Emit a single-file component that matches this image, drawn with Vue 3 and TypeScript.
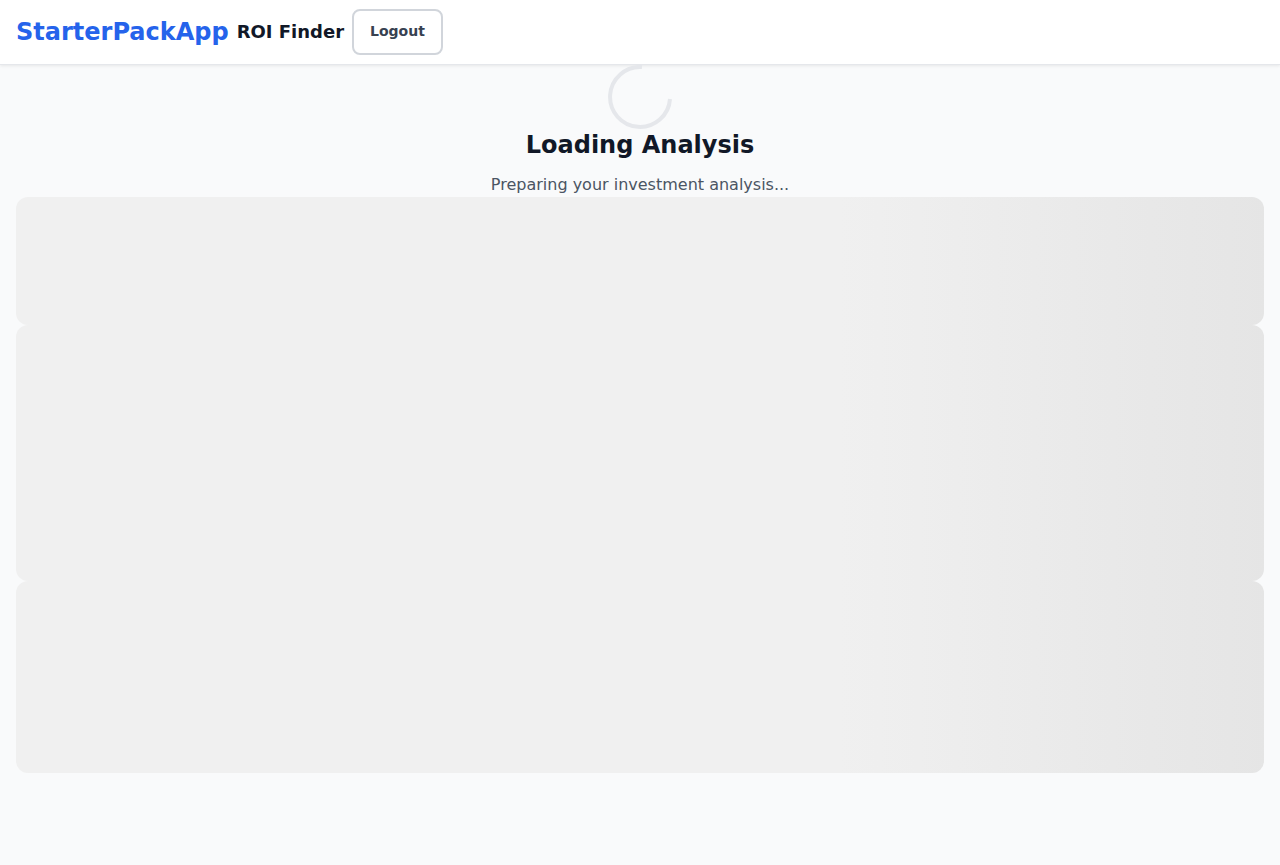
<script setup lang="ts">
interface Skeleton {
  id: string
  size: 'small' | 'large' | 'medium'
}

const skeletons: Skeleton[] = [
  { id: 'summary', size: 'small' },
  { id: 'chart', size: 'large' },
  { id: 'details', size: 'medium' },
]
</script>

<template>
  <div class="page">
    <header class="header">
      <a class="brand" href="#">StarterPackApp</a>
      <span class="product">ROI Finder</span>
      <button class="logout" type="button">Logout</button>
    </header>
    <main class="content" aria-busy="true">
      <svg class="spinner" viewBox="0 0 64 64" aria-hidden="true">
        <path d="M62 34 A30 30 0 1 1 34 2" />
      </svg>
      <h1 class="title">Loading Analysis</h1>
      <p class="message">Preparing your investment analysis...</p>
      <div v-for="item in skeletons" :key="item.id" class="skeleton" :class="item.size"></div>
    </main>
  </div>
</template>

<style>
body {
  margin: 0;
  background: #f9fafb;
}
</style>

<style scoped>
.page {
  min-height: 100vh;
  font-family: "DejaVu Sans", sans-serif;
  font-size: 16px;
  line-height: 24px;
  color: #111827;
}
.header {
  display: flex;
  align-items: center;
  gap: 8px;
  height: 64px;
  padding: 0 16px;
  background: #ffffff;
  border-bottom: 1px solid #e5e7eb;
  box-shadow: 0 1px 3px rgba(0, 0, 0, 0.08);
}
.brand {
  font-size: 24px;
  font-weight: 700;
  line-height: 32px;
  color: #2563eb;
  text-decoration: none;
}
.product {
  font-size: 18px;
  font-weight: 600;
  line-height: 28px;
}
.logout {
  padding: 10px 16px 12px;
  border: 2px solid #d1d5db;
  border-radius: 8px;
  background: #ffffff;
  color: #374151;
  font-family: inherit;
  font-size: 14px;
  font-weight: 600;
  line-height: 20px;
}
.content {
  display: flex;
  flex-direction: column;
  padding: 0 16px;
}
.spinner {
  align-self: center;
  width: 64px;
  height: 64px;
  fill: none;
  stroke: #e5e7eb;
  stroke-width: 4;
}
.title {
  margin: 0 0 12px;
  font-size: 24px;
  font-weight: 700;
  line-height: 32px;
  text-align: center;
}
.message {
  margin: 0;
  color: #4b5563;
  text-align: center;
}
.skeleton {
  border-radius: 12px;
  background: linear-gradient(90deg, #f0f0f0 66%, #e0e0e0 116%);
}
.small {
  height: 128px;
}
.large {
  height: 256px;
}
.medium {
  height: 192px;
}
</style>
